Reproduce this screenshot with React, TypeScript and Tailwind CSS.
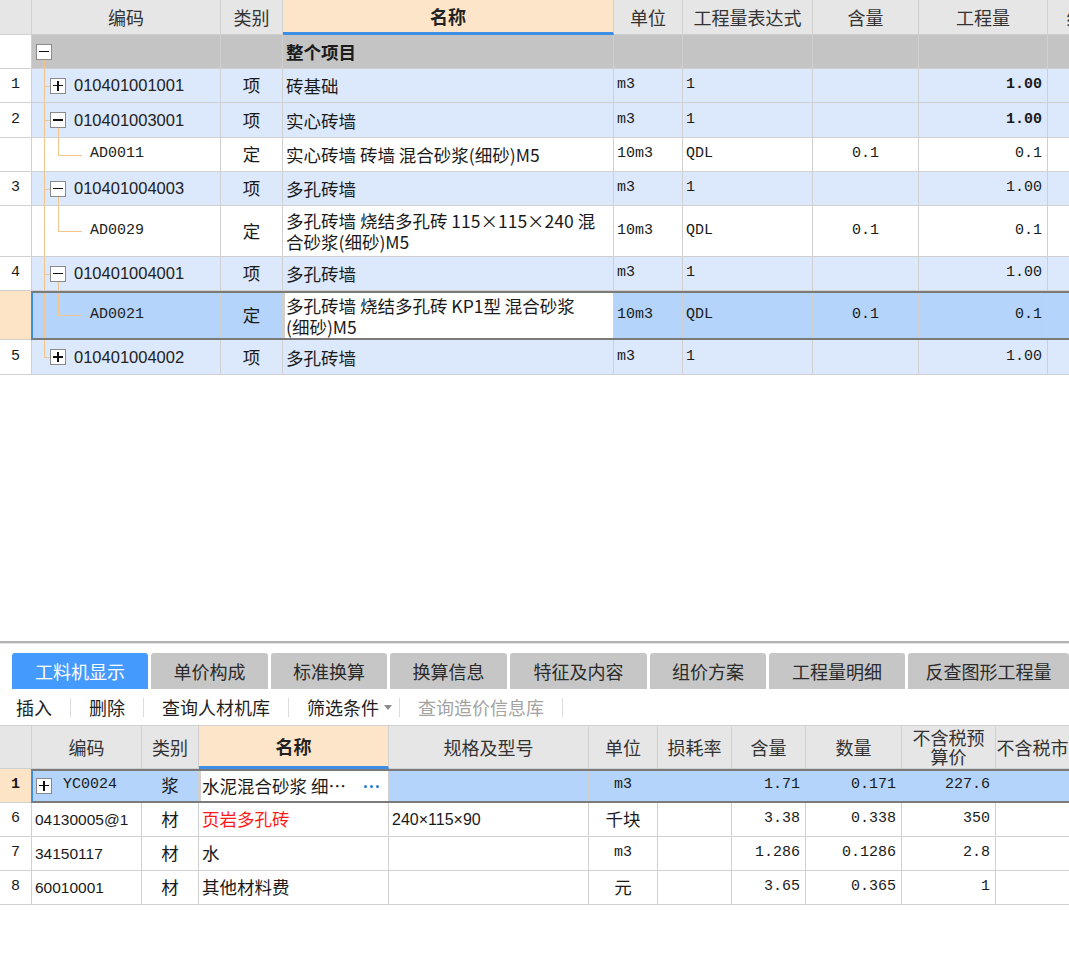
import React from 'react';

type TopRow = {
  kind: 'root' | 'item' | 'sub';
  h: string;
  num?: string;
  plus?: boolean;
  childLine?: boolean;
  last?: boolean;
  code?: string;
  cat?: string;
  name?: string[];
  unit?: string;
  expr?: string;
  content?: string;
  qty?: string;
  bold?: boolean;
  selected?: boolean;
};

const topRows: TopRow[] = [
  { kind: 'root', h: 'h-[34px]', name: ['整个项目'] },
  { kind: 'item', h: 'h-[34px]', num: '1', plus: true, code: '010401001001', cat: '项', name: ['砖基础'], unit: 'm3', expr: '1', qty: '1.00', bold: true },
  { kind: 'item', h: 'h-[35px]', num: '2', childLine: true, code: '010401003001', cat: '项', name: ['实心砖墙'], unit: 'm3', expr: '1', qty: '1.00', bold: true },
  { kind: 'sub', h: 'h-[34px]', code: 'AD0011', cat: '定', name: ['实心砖墙 砖墙 混合砂浆(细砂)M5'], unit: '10m3', expr: 'QDL', content: '0.1', qty: '0.1' },
  { kind: 'item', h: 'h-[34px]', num: '3', childLine: true, code: '010401004003', cat: '项', name: ['多孔砖墙'], unit: 'm3', expr: '1', qty: '1.00' },
  { kind: 'sub', h: 'h-[51px]', code: 'AD0029', cat: '定', name: ['多孔砖墙 烧结多孔砖 115×115×240 混', '合砂浆(细砂)M5'], unit: '10m3', expr: 'QDL', content: '0.1', qty: '0.1' },
  { kind: 'item', h: 'h-[34px]', num: '4', childLine: true, code: '010401004001', cat: '项', name: ['多孔砖墙'], unit: 'm3', expr: '1', qty: '1.00' },
  { kind: 'sub', h: 'h-[49px]', code: 'AD0021', cat: '定', name: ['多孔砖墙 烧结多孔砖 KP1型 混合砂浆', '(细砂)M5'], unit: '10m3', expr: 'QDL', content: '0.1', qty: '0.1', selected: true },
  { kind: 'item', h: 'h-[35px]', num: '5', plus: true, last: true, code: '010401004002', cat: '项', name: ['多孔砖墙'], unit: 'm3', expr: '1', qty: '1.00' },
];

const lowerRows = [
  { num: '6', code: '04130005@1', cat: '材', name: '页岩多孔砖', red: true, spec: '240×115×90', unit: '千块', content: '3.38', amount: '0.338', price: '350' },
  { num: '7', code: '34150117', cat: '材', name: '水', spec: '', unit: 'm3', content: '1.286', amount: '0.1286', price: '2.8' },
  { num: '8', code: '60010001', cat: '材', name: '其他材料费', spec: '', unit: '元', content: '3.65', amount: '0.365', price: '1' },
];

const tabs = [
  { label: '工料机显示', w: 'w-[136px]', active: true },
  { label: '单价构成', w: 'w-[117px]' },
  { label: '标准换算', w: 'w-[116px]' },
  { label: '换算信息', w: 'w-[117px]' },
  { label: '特征及内容', w: 'w-[137px]' },
  { label: '组价方案', w: 'w-[116px]' },
  { label: '工程量明细', w: 'w-[136px]' },
  { label: '反查图形工程量', w: 'w-[161px]' },
];

const cell = 'shrink-0 h-full border-r border-b border-[#d0d0d0] flex items-center overflow-hidden whitespace-nowrap';
const mono = "[font-family:'Liberation_Mono','Noto_Sans_CJK_SC',monospace] text-[15px]";
const sans = "[font-family:'Liberation_Sans','Noto_Sans_CJK_SC',sans-serif]";
const line = 'absolute bg-[#f3c48c]';

function TreeBox({ plus, className }: { plus?: boolean; className: string }) {
  return (
    <span className={`absolute top-1/2 -translate-y-1/2 w-[16px] h-[16px] border border-[#8a8a8a] bg-white flex items-center justify-center ${className}`}>
      <span className="relative w-[10px] h-[10px]">
        <span className="absolute left-0 top-[4px] w-[10px] h-[1.5px] bg-[#111]" />
        {plus && <span className="absolute top-0 left-[4.25px] w-[1.5px] h-[10px] bg-[#111]" />}
      </span>
    </span>
  );
}

function CodeCell({ row }: { row: TopRow }) {
  return (
    <div className={`${cell} w-[189px] relative`}>
      {row.kind === 'root' && (
        <>
          <TreeBox className="left-[4px]" />
          <span className={`${line} left-[12px] w-px top-[calc(50%+8px)] bottom-0`} />
        </>
      )}
      {row.kind === 'item' && (
        <>
          <span className={`${line} left-[12px] w-px top-0 ${row.last ? 'h-1/2' : 'bottom-0'}`} />
          <span className={`${line} left-[12px] top-1/2 w-[6px] h-px`} />
          <TreeBox plus={row.plus} className="left-[18px]" />
          {row.childLine && <span className={`${line} left-[26px] w-px top-[calc(50%+8px)] bottom-0`} />}
          <span className={`${sans} text-[16.5px] pl-[42px] text-[#222]`}>{row.code}</span>
        </>
      )}
      {row.kind === 'sub' && (
        <>
          <span className={`${line} left-[12px] w-px top-0 bottom-0`} />
          <span className={`${line} left-[26px] w-px top-0 h-1/2`} />
          <span className={`${line} left-[26px] top-1/2 w-[24px] h-px`} />
          <span className={`${mono} text-[14px] pl-[58px] text-[#222]`}>{row.code}</span>
        </>
      )}
    </div>
  );
}

function TopGrid() {
  const head = 'shrink-0 h-full border-r border-b border-[#d0d0d0] bg-[#e6e6e6] flex items-center justify-center text-[18px] text-[#333]';
  return (
    <div className="w-[1200px]">
      <div className="flex h-[35px]">
        <div className={`${head} w-[32px]`} />
        <div className={`${head} w-[189px]`}>编码</div>
        <div className={`${head} w-[62px]`}>类别</div>
        <div className="shrink-0 h-full w-[331px] border-r border-[#d0d0d0] border-b-[3px] border-b-[#3d8fe6] bg-[#fde5c9] flex items-center justify-center text-[18px] font-bold text-[#222]">名称</div>
        <div className={`${head} w-[69px]`}>单位</div>
        <div className={`${head} w-[130px]`}>工程量表达式</div>
        <div className={`${head} w-[106px]`}>含量</div>
        <div className={`${head} w-[129px]`}>工程量</div>
        <div className={`${head} w-[110px]`}>综合单价</div>
      </div>

      {topRows.map((r, i) => {
        const bg = r.selected
          ? 'bg-[#b4d4fb]'
          : r.kind === 'root'
            ? 'bg-[#c4c4c4]'
            : r.kind === 'item'
              ? 'bg-[#dce8fc]'
              : 'bg-white';
        return (
          <div key={i} className={`relative flex ${r.h} text-[17.5px] text-[#1a1a1a]`}>
            <div className={`${cell} w-[32px] justify-center ${mono} ${r.selected ? 'bg-[#fde4c7]' : 'bg-white'}`}>{r.num}</div>
            <div className={`flex h-full ${bg}`}>
              <CodeCell row={r} />
              <div className={`${cell} w-[62px] justify-center`}>{r.cat}</div>
              <div
                className={`${cell} w-[331px] ${r.selected ? 'bg-white border-2 border-[#7a7a7a] pl-[1px]' : 'pl-[3px]'} ${r.kind === 'root' ? 'font-bold' : ''}`}
              >
                <div className="leading-[21px]">
                  {r.name?.map((t, j) => (
                    <div key={j}>{t}</div>
                  ))}
                </div>
              </div>
              <div className={`${cell} w-[69px] pl-[3px] ${mono}`}>{r.unit}</div>
              <div className={`${cell} w-[130px] pl-[3px] ${mono}`}>{r.expr}</div>
              <div className={`${cell} w-[106px] justify-center ${mono}`}>{r.content}</div>
              <div className={`${cell} w-[129px] justify-end pr-[5px] ${mono} ${r.bold ? 'font-bold' : ''}`}>{r.qty}</div>
              <div className={`${cell} w-[110px]`} />
            </div>
            {r.selected && (
              <div className="absolute inset-y-0 left-[31px] right-0 border-y-2 border-[#7a7a7a] border-l-2 border-l-[#3d8fe6] pointer-events-none" />
            )}
          </div>
        );
      })}
    </div>
  );
}

function Toolbar() {
  const sep = 'w-px h-[19px] bg-[#dcdcdc] shrink-0';
  return (
    <div className="h-[36px] shrink-0 flex items-center pl-[16px] text-[18px] text-[#1f1f1f] whitespace-nowrap">
      <span>插入</span>
      <span className={`${sep} ml-[18px]`} />
      <span className="ml-[18px]">删除</span>
      <span className={`${sep} ml-[18px]`} />
      <span className="ml-[18px]">查询人材机库</span>
      <span className={`${sep} ml-[18px]`} />
      <span className="ml-[18px]">筛选条件</span>
      <svg className="ml-[5px] shrink-0" width="8" height="5" viewBox="0 0 8 5">
        <path d="M0 0 L8 0 L4 5 Z" fill="#8a8a8a" />
      </svg>
      <span className={`${sep} ml-[7px]`} />
      <span className="ml-[18px] text-[#a3a3a3]">查询造价信息库</span>
      <span className={`${sep} ml-[18px]`} />
    </div>
  );
}

function LowerGrid() {
  const head = 'shrink-0 h-full border-r border-b border-[#d0d0d0] bg-[#e6e6e6] flex items-center justify-center text-[18px] text-[#333] text-center leading-[19px]';
  return (
    <div className="w-[1200px]">
      <div className="flex h-[44px] border-t border-[#d0d0d0]">
        <div className={`${head} w-[32px]`} />
        <div className={`${head} w-[110px]`}>编码</div>
        <div className={`${head} w-[57px]`}>类别</div>
        <div className="shrink-0 h-full w-[190px] border-r border-[#d0d0d0] border-b-[3px] border-b-[#3d8fe6] bg-[#fde5c9] flex items-center justify-center text-[18px] font-bold text-[#222]">名称</div>
        <div className={`${head} w-[200px]`}>规格及型号</div>
        <div className={`${head} w-[69px]`}>单位</div>
        <div className={`${head} w-[74px]`}>损耗率</div>
        <div className={`${head} w-[74px]`}>含量</div>
        <div className={`${head} w-[96px]`}>数量</div>
        <div className={`${head} w-[94px]`}>
          <div>
            <div>不含税预</div>
            <div>算价</div>
          </div>
        </div>
        <div className={`${head} w-[110px]`}>不含税市场价</div>
      </div>

      <div className="relative flex h-[34px] text-[17.5px] text-[#1a1a1a]">
        <div className={`${cell} w-[32px] justify-center bg-[#fde4c7] ${mono} font-bold`}>1</div>
        <div className="flex h-full bg-[#b4d4fb]">
          <div className={`${cell} w-[110px] relative`}>
            <TreeBox plus className="left-[4px]" />
            <span className={`${mono} text-[14px] pl-[31px]`}>YC0024</span>
          </div>
          <div className={`${cell} w-[57px] justify-center`}>浆</div>
          <div className={`${cell} w-[190px] bg-white border-2 border-[#7a7a7a] pl-[1px]`}>
            <span>水泥混合砂浆 细…</span>
            <span className="ml-auto mr-[9px] flex gap-[3px]">
              <span className="w-[3px] h-[3px] rounded-full bg-[#2a78d8]" />
              <span className="w-[3px] h-[3px] rounded-full bg-[#2a78d8]" />
              <span className="w-[3px] h-[3px] rounded-full bg-[#2a78d8]" />
            </span>
          </div>
          <div className={`${cell} w-[200px]`} />
          <div className={`${cell} w-[69px] justify-center ${mono}`}>m3</div>
          <div className={`${cell} w-[74px]`} />
          <div className={`${cell} w-[74px] justify-end pr-[5px] ${mono}`}>1.71</div>
          <div className={`${cell} w-[96px] justify-end pr-[5px] ${mono}`}>0.171</div>
          <div className={`${cell} w-[94px] justify-end pr-[5px] ${mono}`}>227.6</div>
          <div className={`${cell} w-[110px]`} />
        </div>
        <div className="absolute inset-y-0 left-[31px] right-0 border-y-2 border-[#7a7a7a] border-l-2 border-l-[#3d8fe6] pointer-events-none" />
      </div>

      {lowerRows.map((r) => (
        <div key={r.num} className="flex h-[34px] text-[17.5px] text-[#1a1a1a] bg-white">
          <div className={`${cell} w-[32px] justify-center ${mono}`}>{r.num}</div>
          <div className={`${cell} w-[110px] pl-[3px] ${sans} text-[15.5px]`}>{r.code}</div>
          <div className={`${cell} w-[57px] justify-center`}>{r.cat}</div>
          <div className={`${cell} w-[190px] pl-[3px] ${r.red ? 'text-[#ff1a1a]' : ''}`}>{r.name}</div>
          <div className={`${cell} w-[200px] pl-[3px] ${sans} text-[16px]`}>{r.spec}</div>
          <div className={`${cell} w-[69px] justify-center ${r.unit === 'm3' ? mono : ''}`}>{r.unit}</div>
          <div className={`${cell} w-[74px]`} />
          <div className={`${cell} w-[74px] justify-end pr-[5px] ${mono}`}>{r.content}</div>
          <div className={`${cell} w-[96px] justify-end pr-[5px] ${mono}`}>{r.amount}</div>
          <div className={`${cell} w-[94px] justify-end pr-[5px] ${mono}`}>{r.price}</div>
          <div className={`${cell} w-[110px]`} />
        </div>
      ))}
    </div>
  );
}

export default function App() {
  return (
    <div className="w-[1069px] h-[970px] overflow-hidden bg-white flex flex-col text-[#1f1f1f] [font-family:'Noto_Sans_CJK_SC',sans-serif]">
      <div className="h-[641px] shrink-0 overflow-hidden">
        <TopGrid />
      </div>
      <div className="h-[3px] shrink-0 border-t-2 border-[#b3b3b3] bg-[#e2e2e2]" />

      <div className="h-[45px] shrink-0 flex items-end gap-[3px] pl-[12px] whitespace-nowrap">
        {tabs.map((t) => (
          <div
            key={t.label}
            className={`${t.w} shrink-0 h-[36px] rounded-t-[3px] flex items-center justify-center text-[18px] ${
              t.active ? 'bg-[#459bfd] text-white' : 'bg-[#c6c6c6] text-[#2b2b2b]'
            }`}
          >
            {t.label}
          </div>
        ))}
      </div>

      <Toolbar />
      <LowerGrid />
    </div>
  );
}
